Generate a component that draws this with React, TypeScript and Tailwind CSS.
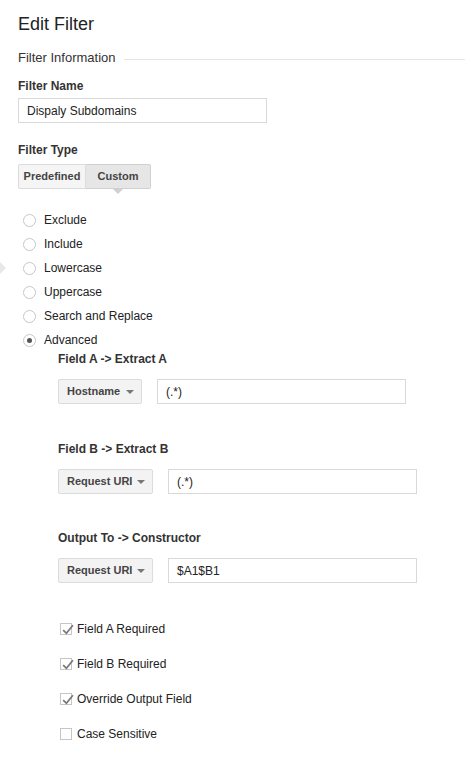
import { useState } from 'react';

const font = { fontFamily: '"Liberation Sans", Arial, sans-serif' };

function Radio({ label, checked }: { label: string; checked?: boolean }) {
  return (
    <label className="flex items-center h-6 gap-[8px] text-[12px] text-[#222]">
      <span className="w-[13px] h-[13px] rounded-full border border-[#c6c6c6] bg-white flex items-center justify-center">
        {checked && <span className="w-[5px] h-[5px] rounded-full bg-[#555]" />}
      </span>
      {label}
    </label>
  );
}

function Check({ label, checked }: { label: string; checked?: boolean }) {
  return (
    <label className="flex items-center h-[35px] gap-[5px] text-[12px] text-[#222]">
      <span className="w-[12px] h-[12px] border border-[#c6c6c6] bg-white relative">
        {checked && (
          <svg viewBox="0 0 12 12" className="absolute -top-[1px] left-0 w-[13px] h-[13px]">
            <path d="M2 6.5 L5 9.5 L11 2" fill="none" stroke="#777" strokeWidth="1.6" />
          </svg>
        )}
      </span>
      {label}
    </label>
  );
}

function Dropdown({ label, width }: { label: string; width: string }) {
  return (
    <div className={`${width} h-[25px] bg-[#f3f3f3] border border-[#dcdcdc] rounded-[2px] flex items-center justify-between pl-[8px] pr-[7px] text-[11px] font-bold text-[#444]`}>
      <span>{label}</span>
      <span className="w-0 h-0 border-l-[4px] border-r-[4px] border-t-[4px] border-l-transparent border-r-transparent border-t-[#777]" />
    </div>
  );
}

function Input({ value, width }: { value: string; width: string }) {
  return (
    <div className={`${width} h-[25px] border border-[#d9d9d9] bg-white flex items-center px-[8px] text-[12px] text-[#222]`}>
      {value}
    </div>
  );
}

export default function App() {
  const [type] = useState('Advanced');
  return (
    <div className="relative w-[465px] h-[759px] bg-white overflow-hidden pl-[18px]" style={font}>
      <h1 className="pt-[13px] text-[18px] leading-[22px] text-[#222]">Edit Filter</h1>

      <div className="mt-[15px] flex items-center gap-[8px]">
        <span className="text-[13px] text-[#333] leading-[16px]">Filter Information</span>
        <div className="flex-1 h-px bg-[#e5e5e5] mt-[2px]" />
      </div>

      <div className="mt-[13px] text-[12px] font-bold text-[#333] leading-[15px]">Filter Name</div>
      <div className="mt-[4px] w-[249px] h-[25px] border border-[#d9d9d9] flex items-center px-[8px] text-[12px] text-[#222]">
        Dispaly Subdomains
      </div>

      <div className="mt-[20px] text-[12px] font-bold text-[#333] leading-[15px]">Filter Type</div>
      <div className="mt-[6px] flex text-[11px] font-bold text-[#444]">
        <div className="w-[68px] h-[25px] bg-[#f5f5f5] border border-[#dcdcdc] rounded-l-[2px] flex items-center justify-center">Predefined</div>
        <div className="relative w-[65px] h-[25px] bg-[#e6e6e6] border border-l-0 border-[#d0d0d0] rounded-r-[2px] flex items-center justify-center">
          Custom
          <span className="absolute left-1/2 -translate-x-1/2 top-[23px] w-0 h-0 border-l-[6px] border-r-[6px] border-t-[6px] border-l-transparent border-r-transparent border-t-[#d0d0d0]" />
        </div>
      </div>

      <div className="mt-[19px] pl-[5px] flex flex-col">
        {['Exclude', 'Include', 'Lowercase', 'Uppercase', 'Search and Replace', 'Advanced'].map((l) => (
          <Radio key={l} label={l} checked={l === type} />
        ))}
      </div>

      <span className="absolute left-0 top-[262px] w-0 h-0 border-t-[6px] border-b-[6px] border-l-[6px] border-t-transparent border-b-transparent border-l-[#e8e8e8]" />

      <div className="pl-[40px]">
        <div className="mt-0 text-[12px] font-bold text-[#333] leading-[15px]">Field A -&gt; Extract A</div>
        <div className="mt-[12px] flex gap-[15px]">
          <Dropdown label="Hostname" width="w-[84px]" />
          <Input value="(.*)" width="w-[249px]" />
        </div>

        <div className="mt-[38px] text-[12px] font-bold text-[#333] leading-[15px]">Field B -&gt; Extract B</div>
        <div className="mt-[12px] flex gap-[15px]">
          <Dropdown label="Request URI" width="w-[95px]" />
          <Input value="(.*)" width="w-[249px]" />
        </div>

        <div className="mt-[37px] text-[12px] font-bold text-[#333] leading-[15px]">Output To -&gt; Constructor</div>
        <div className="mt-[12px] flex gap-[15px]">
          <Dropdown label="Request URI" width="w-[95px]" />
          <Input value="$A1$B1" width="w-[249px]" />
        </div>

        <div className="mt-[28px] pl-[2px] flex flex-col">
          <Check label="Field A Required" checked />
          <Check label="Field B Required" checked />
          <Check label="Override Output Field" checked />
          <Check label="Case Sensitive" />
        </div>
      </div>
    </div>
  );
}
